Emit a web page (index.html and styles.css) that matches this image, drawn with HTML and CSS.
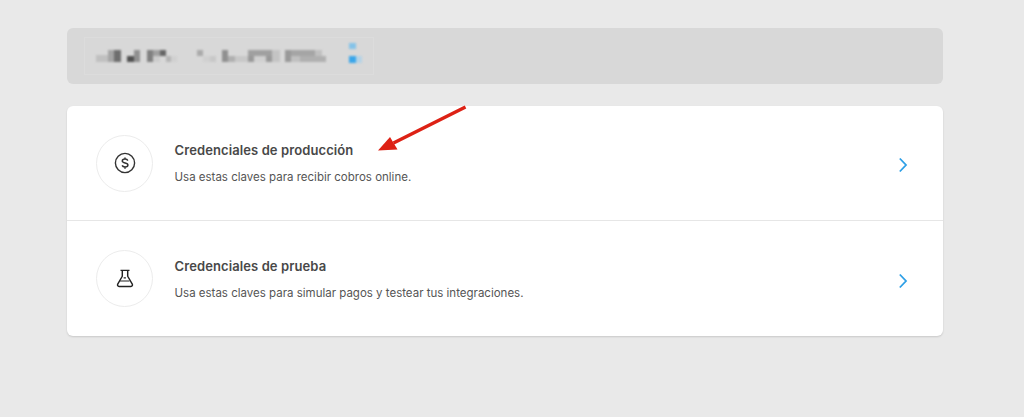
FILE: index.html
```html
<!DOCTYPE html>
<html lang="es">
<head>
<meta charset="utf-8">
<title>Credenciales</title>
<link rel="stylesheet" href="styles.css">
</head>
<body>
<main class="page">
  <div class="banner">
    <div class="redacted">
      <svg class="mosaic" width="290" height="38" viewBox="84 37 290 38" aria-hidden="true">
        <rect x="96" y="55" width="12" height="7" fill="#c0c0c0"/>
        <rect x="108" y="50" width="6" height="12" fill="#a5a5a5"/>
        <rect x="114" y="50" width="7" height="12" fill="#6e6e6e"/>
        <rect x="127" y="56" width="7" height="6" fill="#505050"/>
        <rect x="134" y="50" width="6" height="12" fill="#909090"/>
        <rect x="147" y="50" width="6" height="12" fill="#808080"/>
        <rect x="153" y="50" width="7" height="6" fill="#a0a0a0"/>
        <rect x="160" y="50" width="6" height="6" fill="#666666"/>
        <rect x="153" y="56" width="7" height="6" fill="#cccccc"/>
        <rect x="166" y="56" width="5" height="6" fill="#b5b5b5"/>
        <rect x="171" y="56" width="6" height="6" fill="#d0d0d0"/>
        <rect x="197" y="50" width="6" height="6" fill="#aaaaaa"/>
        <rect x="203" y="56" width="7" height="6" fill="#d0d0d0"/>
        <rect x="210" y="56" width="6" height="6" fill="#c8c8c8"/>
        <rect x="222" y="50" width="6" height="12" fill="#909090"/>
        <rect x="228" y="56" width="7" height="6" fill="#b0b0b0"/>
        <rect x="235" y="56" width="13" height="6" fill="#c8c8c8"/>
        <rect x="248" y="50" width="24" height="6" fill="#a0a0a0"/>
        <rect x="248" y="56" width="6" height="6" fill="#999999"/>
        <rect x="254" y="56" width="12" height="6" fill="#d0d0d0"/>
        <rect x="266" y="56" width="6" height="6" fill="#999999"/>
        <rect x="272" y="50" width="8" height="12" fill="#c4c4c4"/>
        <rect x="285" y="50" width="6" height="12" fill="#999999"/>
        <rect x="291" y="50" width="24" height="6" fill="#a5a5a5"/>
        <rect x="291" y="56" width="9" height="6" fill="#c0c0c0"/>
        <rect x="300" y="56" width="26" height="6" fill="#b0b0b0"/>
        <rect x="315" y="50" width="7" height="6" fill="#c0c0c0"/>
        <rect x="349" y="43" width="7" height="6" fill="#85c3e8"/>
        <rect x="349" y="56" width="7" height="7" fill="#3aa6ea"/>
        <rect x="356" y="56" width="6" height="7" fill="#b5d3e6"/>
      </svg>
    </div>
  </div>

  <section class="card">
    <a class="row">
      <span class="badge">
        <svg width="22" height="22" viewBox="0 0 22 22" fill="none" stroke="#333" stroke-width="1.4" aria-hidden="true">
          <circle cx="11" cy="11" r="9.6"/>
          <path d="M13.800 8.600c-.4-1-1.500-1.500-2.800-1.500-1.600 0-2.700.7-2.700 1.900 0 2.600 5.600 1.300 5.600 3.900 0 1.200-1.200 2-2.900 2-1.400 0-2.500-.6-2.900-1.500M11 5.400v1.700M11 15v1.700" stroke-width="1.500"/>
        </svg>
      </span>
      <span class="copy">
        <span class="title">Credenciales de producción</span>
        <span class="desc">Usa estas claves para recibir cobros online.</span>
      </span>
      <svg class="chev" width="10" height="16" viewBox="0 0 10 16" fill="none" stroke="#2d9fe6" stroke-width="1.8" aria-hidden="true"><path d="M1.8 1.5 8 8l-6.200 6.500"/></svg>
    </a>
    <a class="row">
      <span class="badge">
        <svg width="18" height="19" viewBox="0 0 20 20" fill="none" stroke="#222" stroke-width="1.600" stroke-linejoin="round" aria-hidden="true">
          <path d="M5 1h10M7 1v6.500L1.900 16.300c-.6 1.200.1 2.500 1.500 2.500h13.200c1.400 0 2.100-1.300 1.500-2.500L13 7.500V1"/>
          <path d="M4.500 12.800h10.500M8.500 9.300H11" stroke-width="1.200"/>
        </svg>
      </span>
      <span class="copy">
        <span class="title">Credenciales de prueba</span>
        <span class="desc">Usa estas claves para simular pagos y testear tus integraciones.</span>
      </span>
      <svg class="chev" width="10" height="16" viewBox="0 0 10 16" fill="none" stroke="#2d9fe6" stroke-width="1.8" aria-hidden="true"><path d="M1.8 1.5 8 8l-6.200 6.500"/></svg>
    </a>
  </section>
</main>
<svg class="arrow" width="96" height="54" viewBox="0 0 96 54" aria-hidden="true">
  <path d="M89.500 3 17.500 39" stroke="#dd2115" stroke-width="3.500" fill="none"/>
  <path d="M2 46.500 14 33 21.500 45.500Z" fill="#dd2115"/>
</svg>
</body>
</html>
```
FILE: styles.css
```css
* { box-sizing: border-box; }
html, body { margin: 0; height: 100%; }
body {
  background: #e9e9e9;
  font-family: "Inter", "Liberation Sans", sans-serif;
  position: relative;
  overflow: hidden;
}
.page {
  width: 876px;
  margin-left: 67px;
  padding-top: 28px;
  display: flex;
  flex-direction: column;
  gap: 22px;
}
.banner {
  height: 56px;
  background: #d8d8d8;
  border-radius: 6px;
  padding: 9px 17px;
}
.redacted {
  width: 290px;
  height: 38px;
  border: 1px solid #dcdcdc;
  position: relative;
}
.mosaic {
  position: absolute;
  left: -1px;
  top: -1px;
  filter: blur(0.8px);
}
.card {
  background: #fff;
  border-radius: 6px;
  box-shadow: 0 1px 2px rgba(0, 0, 0, 0.14);
  display: flex;
  flex-direction: column;
}
.row {
  height: 116px;
  padding: 0 35px 0 29px;
  display: flex;
  align-items: center;
  border-top: 1px solid #e6e6e6;
}
.row:first-child { border-top: 0; height: 114px; }
.row + .row .copy { padding-top: 2px; }
.badge {
  width: 57px;
  height: 57px;
  border-radius: 50%;
  border: 1px solid #ececec;
  display: flex;
  align-items: center;
  justify-content: center;
  flex: none;
}
.copy {
  margin-left: 21.500px;
  flex: 1;
  display: flex;
  flex-direction: column;
  gap: 10px;
}
.title {
  font-size: 13px;
  line-height: 17px;
  font-weight: 600;
  letter-spacing: 0.1px;
  color: #484848;
}
.desc {
  font-size: 11.500px;
  line-height: 16px;
  color: #555555;
}
.chev { flex: none; margin-top: 4px; }
.arrow {
  position: absolute;
  left: 376px;
  top: 104px;
}
```
